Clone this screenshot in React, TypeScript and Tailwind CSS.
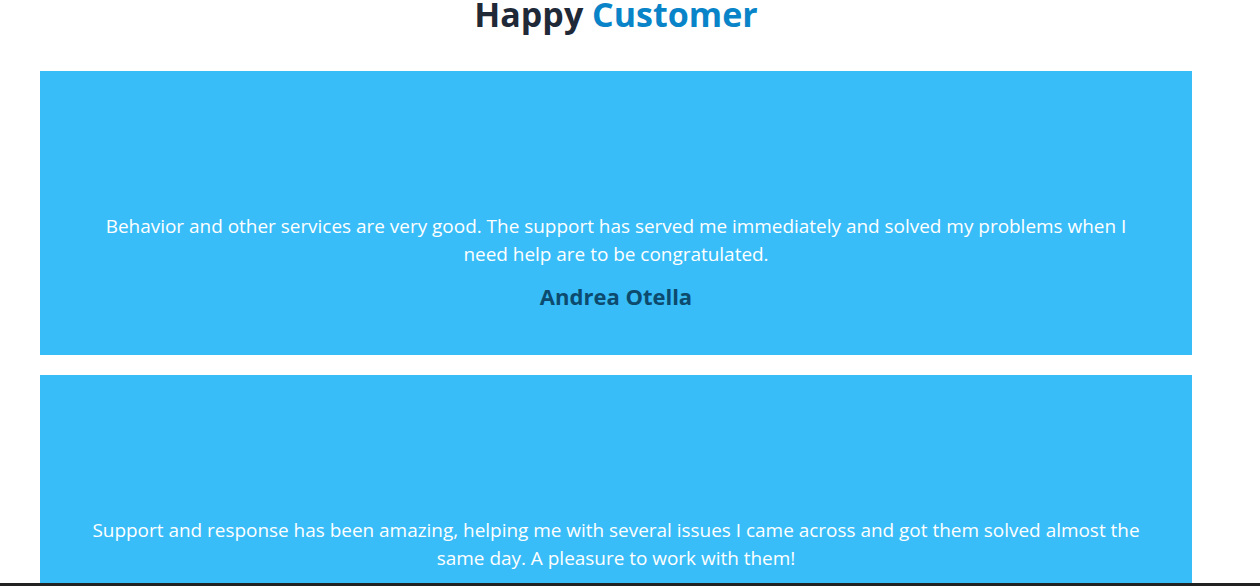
import React from "react";

const testimonials = [
  {
    text: "Behavior and other services are very good. The support has served me immediately and solved my problems when I need help are to be congratulated.",
    name: "Andrea Otella",
  },
  {
    text: "Support and response has been amazing, helping me with several issues I came across and got them solved almost the same day. A pleasure to work with them!",
    name: "John Smith",
  },
];

export default function App() {
  return (
    <div className="min-h-screen bg-white" style={{ fontFamily: '"Open Sans", "Noto Sans", sans-serif' }}>
      <div className="ml-10 w-[1152px]">
        <h2 className="-mt-[6px] text-center text-[34px] font-bold leading-[40px] text-[#1f2937]">
          Happy <span className="text-[#0a84c8]">Customer</span>
        </h2>
        <div className="mt-[37px] flex flex-col gap-5">
          {testimonials.map((t) => (
            <div key={t.name} className="flex flex-col items-center bg-[#38bdf8] px-12 pt-12 pb-[45px] text-center">
              <div className="h-[93px] w-24" />
              <p className="text-[18.95px] leading-[28px] text-white">{t.text}</p>
              <h3 className="mt-[14px] text-[22px] font-bold leading-[28px] text-[#0c4a6e]">{t.name}</h3>
            </div>
          ))}
        </div>
      </div>
      <div className="fixed bottom-0 left-0 h-[3px] w-full bg-[#222]" />
    </div>
  );
}
